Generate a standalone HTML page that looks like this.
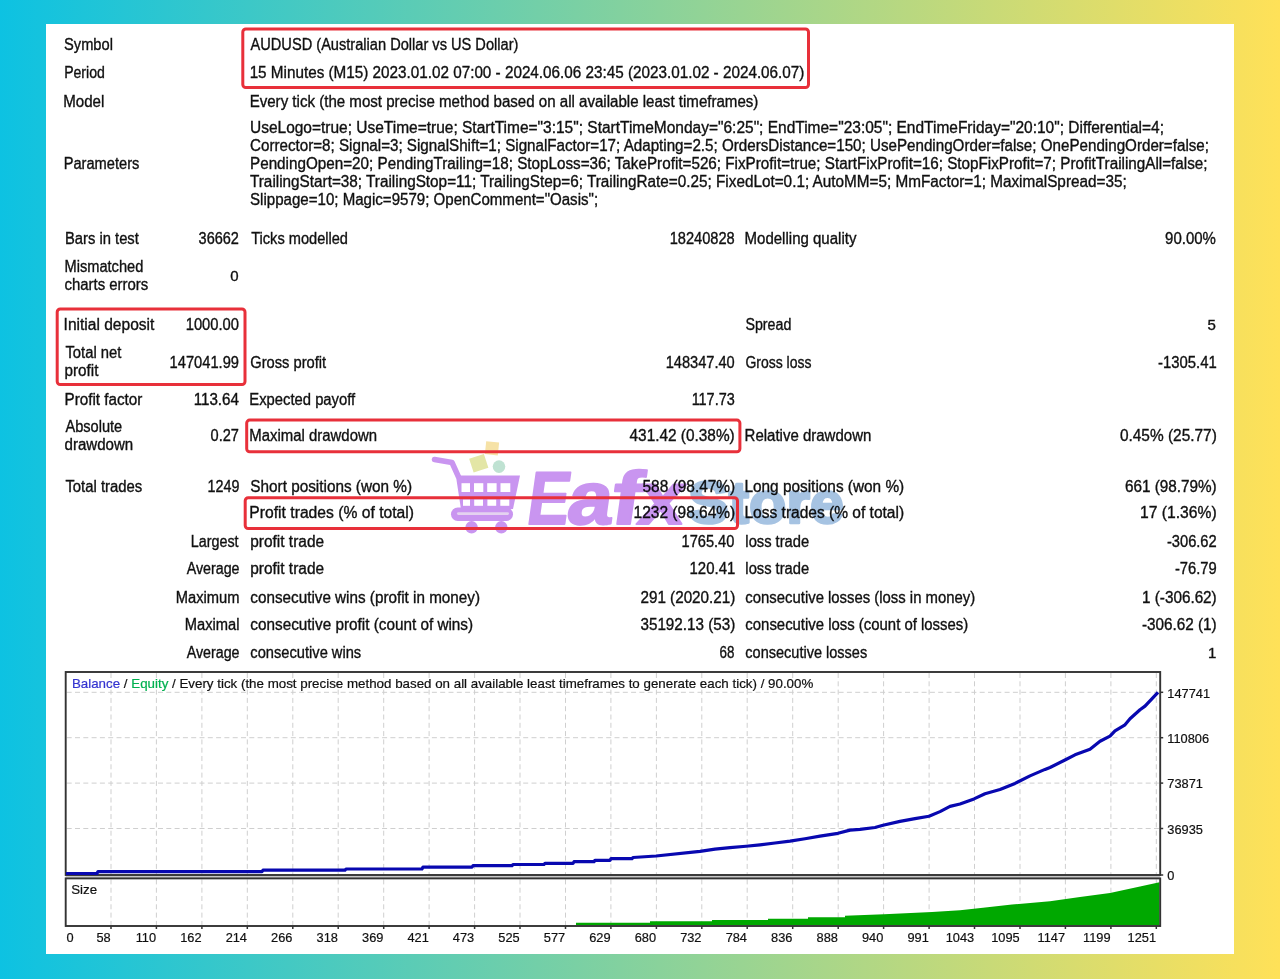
<!DOCTYPE html>
<html><head><meta charset="utf-8"><title>Strategy Tester Report</title>
<style>
html,body{margin:0;padding:0;}
body{width:1280px;height:979px;overflow:hidden;position:relative;background:linear-gradient(90deg,rgb(13,194,226) 0%,rgb(255,225,88) 100%);font-family:"Liberation Sans",sans-serif;}
.panel{position:absolute;left:46px;top:24px;width:1188px;height:930px;background:#fff;}
svg{position:absolute;left:0;top:0;}
svg text{font-family:"Liberation Sans",sans-serif;}
</style></head><body>
<div class="panel"></div>
<svg width="1280" height="979" viewBox="0 0 1280 979" font-size="16" fill="#101010">
<g id="chart">
<line x1="111.0" y1="673" x2="111.0" y2="874" stroke="#cfcfcf" stroke-width="1" stroke-dasharray="5 3.3"/>
<line x1="111.0" y1="879.4" x2="111.0" y2="925" stroke="#cfcfcf" stroke-width="1" stroke-dasharray="5 3.3"/>
<line x1="156.4" y1="673" x2="156.4" y2="874" stroke="#cfcfcf" stroke-width="1" stroke-dasharray="5 3.3"/>
<line x1="156.4" y1="879.4" x2="156.4" y2="925" stroke="#cfcfcf" stroke-width="1" stroke-dasharray="5 3.3"/>
<line x1="201.9" y1="673" x2="201.9" y2="874" stroke="#cfcfcf" stroke-width="1" stroke-dasharray="5 3.3"/>
<line x1="201.9" y1="879.4" x2="201.9" y2="925" stroke="#cfcfcf" stroke-width="1" stroke-dasharray="5 3.3"/>
<line x1="247.3" y1="673" x2="247.3" y2="874" stroke="#cfcfcf" stroke-width="1" stroke-dasharray="5 3.3"/>
<line x1="247.3" y1="879.4" x2="247.3" y2="925" stroke="#cfcfcf" stroke-width="1" stroke-dasharray="5 3.3"/>
<line x1="292.8" y1="673" x2="292.8" y2="874" stroke="#cfcfcf" stroke-width="1" stroke-dasharray="5 3.3"/>
<line x1="292.8" y1="879.4" x2="292.8" y2="925" stroke="#cfcfcf" stroke-width="1" stroke-dasharray="5 3.3"/>
<line x1="338.2" y1="673" x2="338.2" y2="874" stroke="#cfcfcf" stroke-width="1" stroke-dasharray="5 3.3"/>
<line x1="338.2" y1="879.4" x2="338.2" y2="925" stroke="#cfcfcf" stroke-width="1" stroke-dasharray="5 3.3"/>
<line x1="383.7" y1="673" x2="383.7" y2="874" stroke="#cfcfcf" stroke-width="1" stroke-dasharray="5 3.3"/>
<line x1="383.7" y1="879.4" x2="383.7" y2="925" stroke="#cfcfcf" stroke-width="1" stroke-dasharray="5 3.3"/>
<line x1="429.1" y1="673" x2="429.1" y2="874" stroke="#cfcfcf" stroke-width="1" stroke-dasharray="5 3.3"/>
<line x1="429.1" y1="879.4" x2="429.1" y2="925" stroke="#cfcfcf" stroke-width="1" stroke-dasharray="5 3.3"/>
<line x1="474.6" y1="673" x2="474.6" y2="874" stroke="#cfcfcf" stroke-width="1" stroke-dasharray="5 3.3"/>
<line x1="474.6" y1="879.4" x2="474.6" y2="925" stroke="#cfcfcf" stroke-width="1" stroke-dasharray="5 3.3"/>
<line x1="520.0" y1="673" x2="520.0" y2="874" stroke="#cfcfcf" stroke-width="1" stroke-dasharray="5 3.3"/>
<line x1="520.0" y1="879.4" x2="520.0" y2="925" stroke="#cfcfcf" stroke-width="1" stroke-dasharray="5 3.3"/>
<line x1="565.5" y1="673" x2="565.5" y2="874" stroke="#cfcfcf" stroke-width="1" stroke-dasharray="5 3.3"/>
<line x1="565.5" y1="879.4" x2="565.5" y2="925" stroke="#cfcfcf" stroke-width="1" stroke-dasharray="5 3.3"/>
<line x1="610.9" y1="673" x2="610.9" y2="874" stroke="#cfcfcf" stroke-width="1" stroke-dasharray="5 3.3"/>
<line x1="610.9" y1="879.4" x2="610.9" y2="925" stroke="#cfcfcf" stroke-width="1" stroke-dasharray="5 3.3"/>
<line x1="656.4" y1="673" x2="656.4" y2="874" stroke="#cfcfcf" stroke-width="1" stroke-dasharray="5 3.3"/>
<line x1="656.4" y1="879.4" x2="656.4" y2="925" stroke="#cfcfcf" stroke-width="1" stroke-dasharray="5 3.3"/>
<line x1="701.8" y1="673" x2="701.8" y2="874" stroke="#cfcfcf" stroke-width="1" stroke-dasharray="5 3.3"/>
<line x1="701.8" y1="879.4" x2="701.8" y2="925" stroke="#cfcfcf" stroke-width="1" stroke-dasharray="5 3.3"/>
<line x1="747.2" y1="673" x2="747.2" y2="874" stroke="#cfcfcf" stroke-width="1" stroke-dasharray="5 3.3"/>
<line x1="747.2" y1="879.4" x2="747.2" y2="925" stroke="#cfcfcf" stroke-width="1" stroke-dasharray="5 3.3"/>
<line x1="792.7" y1="673" x2="792.7" y2="874" stroke="#cfcfcf" stroke-width="1" stroke-dasharray="5 3.3"/>
<line x1="792.7" y1="879.4" x2="792.7" y2="925" stroke="#cfcfcf" stroke-width="1" stroke-dasharray="5 3.3"/>
<line x1="838.2" y1="673" x2="838.2" y2="874" stroke="#cfcfcf" stroke-width="1" stroke-dasharray="5 3.3"/>
<line x1="838.2" y1="879.4" x2="838.2" y2="925" stroke="#cfcfcf" stroke-width="1" stroke-dasharray="5 3.3"/>
<line x1="883.6" y1="673" x2="883.6" y2="874" stroke="#cfcfcf" stroke-width="1" stroke-dasharray="5 3.3"/>
<line x1="883.6" y1="879.4" x2="883.6" y2="925" stroke="#cfcfcf" stroke-width="1" stroke-dasharray="5 3.3"/>
<line x1="929.1" y1="673" x2="929.1" y2="874" stroke="#cfcfcf" stroke-width="1" stroke-dasharray="5 3.3"/>
<line x1="929.1" y1="879.4" x2="929.1" y2="925" stroke="#cfcfcf" stroke-width="1" stroke-dasharray="5 3.3"/>
<line x1="974.5" y1="673" x2="974.5" y2="874" stroke="#cfcfcf" stroke-width="1" stroke-dasharray="5 3.3"/>
<line x1="974.5" y1="879.4" x2="974.5" y2="925" stroke="#cfcfcf" stroke-width="1" stroke-dasharray="5 3.3"/>
<line x1="1020.0" y1="673" x2="1020.0" y2="874" stroke="#cfcfcf" stroke-width="1" stroke-dasharray="5 3.3"/>
<line x1="1020.0" y1="879.4" x2="1020.0" y2="925" stroke="#cfcfcf" stroke-width="1" stroke-dasharray="5 3.3"/>
<line x1="1065.4" y1="673" x2="1065.4" y2="874" stroke="#cfcfcf" stroke-width="1" stroke-dasharray="5 3.3"/>
<line x1="1065.4" y1="879.4" x2="1065.4" y2="925" stroke="#cfcfcf" stroke-width="1" stroke-dasharray="5 3.3"/>
<line x1="1110.9" y1="673" x2="1110.9" y2="874" stroke="#cfcfcf" stroke-width="1" stroke-dasharray="5 3.3"/>
<line x1="1110.9" y1="879.4" x2="1110.9" y2="925" stroke="#cfcfcf" stroke-width="1" stroke-dasharray="5 3.3"/>
<line x1="1156.3" y1="673" x2="1156.3" y2="874" stroke="#cfcfcf" stroke-width="1" stroke-dasharray="5 3.3"/>
<line x1="1156.3" y1="879.4" x2="1156.3" y2="925" stroke="#cfcfcf" stroke-width="1" stroke-dasharray="5 3.3"/>
<line x1="66.7" y1="692.3" x2="1159.2" y2="692.3" stroke="#cfcfcf" stroke-width="1" stroke-dasharray="5 3.3"/>
<line x1="66.7" y1="737.7" x2="1159.2" y2="737.7" stroke="#cfcfcf" stroke-width="1" stroke-dasharray="5 3.3"/>
<line x1="66.7" y1="783.1" x2="1159.2" y2="783.1" stroke="#cfcfcf" stroke-width="1" stroke-dasharray="5 3.3"/>
<line x1="66.7" y1="828.5" x2="1159.2" y2="828.5" stroke="#cfcfcf" stroke-width="1" stroke-dasharray="5 3.3"/>
<polygon points="576,925 576,922.8 650,922.8 650,921.3 712,921.3 712,920.1 768,920.1 768,918.7 808,918.7 808,917.2 845,917.2 845,915.8 884,914.2 932,912 960,910.3 983,907.8 1012,904.5 1050,901.2 1080,897.1 1110,893 1140,886.5 1159.5,882.2 1159.5,925" fill="#00a800"/>
<rect x="65.7" y="875.6" width="1094.5" height="2.2" fill="#c8c8c8"/>
<rect x="65.7" y="672" width="1094.5" height="203" fill="none" stroke="#333" stroke-width="1.9"/>
<rect x="65.7" y="878.4" width="1094.5" height="47.6" fill="none" stroke="#333" stroke-width="1.9"/>
<polyline points="66,873.5 97,873.5 98,871.6 262,871.6 263,870.2 345,870.2 346,869 422,869 423,867.1 472,867.1 473,865.7 512,865.7 513,864.5 544,864.5 545,863.4 573,863.4 574,861.7 594,861.7 595,860.3 610,860.3 611,858.7 632,858.7 633,857.5 656,856 700,851.4 715,849.1 730,847.7 746,846.25 760,844.8 775,843 790,841.1 805,838.75 820,836.2 838,833.3 850,830.1 860,829.4 875,827.5 883,825.2 900,821.4 915,818.6 929,816.25 940,811.6 950,806.4 960,804 974,798.9 985,793.75 1000,789.5 1015,783.4 1030,775.9 1045,769.4 1050,767.5 1065,760 1075,754.8 1090,749.2 1100,741.25 1110,736.1 1115,730.9 1125,724.8 1130,718.75 1140,709.8 1145,706.1 1158,692.3" fill="none" stroke="#0808b0" stroke-width="3.2" stroke-linejoin="round"/>
<line x1="111.0" y1="926" x2="111.0" y2="929" stroke="#333" stroke-width="1.5"/>
<line x1="156.4" y1="926" x2="156.4" y2="929" stroke="#333" stroke-width="1.5"/>
<line x1="201.9" y1="926" x2="201.9" y2="929" stroke="#333" stroke-width="1.5"/>
<line x1="247.3" y1="926" x2="247.3" y2="929" stroke="#333" stroke-width="1.5"/>
<line x1="292.8" y1="926" x2="292.8" y2="929" stroke="#333" stroke-width="1.5"/>
<line x1="338.2" y1="926" x2="338.2" y2="929" stroke="#333" stroke-width="1.5"/>
<line x1="383.7" y1="926" x2="383.7" y2="929" stroke="#333" stroke-width="1.5"/>
<line x1="429.1" y1="926" x2="429.1" y2="929" stroke="#333" stroke-width="1.5"/>
<line x1="474.6" y1="926" x2="474.6" y2="929" stroke="#333" stroke-width="1.5"/>
<line x1="520.0" y1="926" x2="520.0" y2="929" stroke="#333" stroke-width="1.5"/>
<line x1="565.5" y1="926" x2="565.5" y2="929" stroke="#333" stroke-width="1.5"/>
<line x1="610.9" y1="926" x2="610.9" y2="929" stroke="#333" stroke-width="1.5"/>
<line x1="656.4" y1="926" x2="656.4" y2="929" stroke="#333" stroke-width="1.5"/>
<line x1="701.8" y1="926" x2="701.8" y2="929" stroke="#333" stroke-width="1.5"/>
<line x1="747.2" y1="926" x2="747.2" y2="929" stroke="#333" stroke-width="1.5"/>
<line x1="792.7" y1="926" x2="792.7" y2="929" stroke="#333" stroke-width="1.5"/>
<line x1="838.2" y1="926" x2="838.2" y2="929" stroke="#333" stroke-width="1.5"/>
<line x1="883.6" y1="926" x2="883.6" y2="929" stroke="#333" stroke-width="1.5"/>
<line x1="929.1" y1="926" x2="929.1" y2="929" stroke="#333" stroke-width="1.5"/>
<line x1="974.5" y1="926" x2="974.5" y2="929" stroke="#333" stroke-width="1.5"/>
<line x1="1020.0" y1="926" x2="1020.0" y2="929" stroke="#333" stroke-width="1.5"/>
<line x1="1065.4" y1="926" x2="1065.4" y2="929" stroke="#333" stroke-width="1.5"/>
<line x1="1110.9" y1="926" x2="1110.9" y2="929" stroke="#333" stroke-width="1.5"/>
<line x1="1156.3" y1="926" x2="1156.3" y2="929" stroke="#333" stroke-width="1.5"/>
<line x1="1160.2" y1="692.3" x2="1163.2" y2="692.3" stroke="#333" stroke-width="1.5"/>
<line x1="1160.2" y1="737.7" x2="1163.2" y2="737.7" stroke="#333" stroke-width="1.5"/>
<line x1="1160.2" y1="783.1" x2="1163.2" y2="783.1" stroke="#333" stroke-width="1.5"/>
<line x1="1160.2" y1="828.5" x2="1163.2" y2="828.5" stroke="#333" stroke-width="1.5"/>
<line x1="1160.2" y1="875" x2="1163.2" y2="875" stroke="#333" stroke-width="1.5"/>
</g>
<g id="ctext" stroke="#101010" stroke-width="0.2">
<text x="71.9" y="688.1" font-size="13.3" textLength="741.4" lengthAdjust="spacingAndGlyphs"><tspan fill="#3434d0" stroke="#3434d0">Balance</tspan> / <tspan fill="#00b050" stroke="#00b050">Equity</tspan> / Every tick (the most precise method based on all available least timeframes to generate each tick) / 90.00%</text>
<text x="71.2" y="894.4" font-size="13.3" id="e78">Size</text>
<text x="1167.3" y="697.5999999999999" font-size="12.8" id="e79">147741</text>
<text x="1167.3" y="743.0" font-size="12.8" id="e80">110806</text>
<text x="1167.3" y="788.4" font-size="12.8" id="e81">73871</text>
<text x="1167.3" y="833.8" font-size="12.8" id="e82">36935</text>
<text x="1167.3" y="880.3" font-size="12.8" id="e83">0</text>
<text x="66.5" y="941.8" font-size="12.8" id="e84">0</text>
<text x="110.7" y="941.8" text-anchor="end" font-size="12.8" id="e85">58</text>
<text x="156.1" y="941.8" text-anchor="end" font-size="12.8" id="e86">110</text>
<text x="201.6" y="941.8" text-anchor="end" font-size="12.8" id="e87">162</text>
<text x="247.0" y="941.8" text-anchor="end" font-size="12.8" id="e88">214</text>
<text x="292.4" y="941.8" text-anchor="end" font-size="12.8" id="e89">266</text>
<text x="337.9" y="941.8" text-anchor="end" font-size="12.8" id="e90">318</text>
<text x="383.4" y="941.8" text-anchor="end" font-size="12.8" id="e91">369</text>
<text x="428.8" y="941.8" text-anchor="end" font-size="12.8" id="e92">421</text>
<text x="474.2" y="941.8" text-anchor="end" font-size="12.8" id="e93">473</text>
<text x="519.7" y="941.8" text-anchor="end" font-size="12.8" id="e94">525</text>
<text x="565.2" y="941.8" text-anchor="end" font-size="12.8" id="e95">577</text>
<text x="610.6" y="941.8" text-anchor="end" font-size="12.8" id="e96">629</text>
<text x="656.1" y="941.8" text-anchor="end" font-size="12.8" id="e97">680</text>
<text x="701.5" y="941.8" text-anchor="end" font-size="12.8" id="e98">732</text>
<text x="747.0" y="941.8" text-anchor="end" font-size="12.8" id="e99">784</text>
<text x="792.4" y="941.8" text-anchor="end" font-size="12.8" id="e100">836</text>
<text x="837.9" y="941.8" text-anchor="end" font-size="12.8" id="e101">888</text>
<text x="883.3" y="941.8" text-anchor="end" font-size="12.8" id="e102">940</text>
<text x="928.8" y="941.8" text-anchor="end" font-size="12.8" id="e103">991</text>
<text x="974.2" y="941.8" text-anchor="end" font-size="12.8" id="e104">1043</text>
<text x="1019.7" y="941.8" text-anchor="end" font-size="12.8" id="e105">1095</text>
<text x="1065.1" y="941.8" text-anchor="end" font-size="12.8" id="e106">1147</text>
<text x="1110.6" y="941.8" text-anchor="end" font-size="12.8" id="e107">1199</text>
<text x="1156.0" y="941.8" text-anchor="end" font-size="12.8" id="e108">1251</text>
</g>
<g id="stats" stroke="#101010" stroke-width="0.35">
<text x="64.05" y="49.7" textLength="48.86" lengthAdjust="spacingAndGlyphs" id="e0">Symbol</text>
<text x="250.54" y="49.7" textLength="267.85" lengthAdjust="spacingAndGlyphs" id="e1">AUDUSD (Australian Dollar vs US Dollar)</text>
<text x="64.14" y="78.1" textLength="40.72" lengthAdjust="spacingAndGlyphs" id="e2">Period</text>
<text x="249.64" y="78.1" textLength="554.76" lengthAdjust="spacingAndGlyphs" id="e3">15 Minutes (M15) 2023.01.02 07:00 - 2024.06.06 23:45 (2023.01.02 - 2024.06.07)</text>
<text x="63.24" y="106.5" textLength="41.11" lengthAdjust="spacingAndGlyphs" id="e4">Model</text>
<text x="249.64" y="106.5" textLength="508.76" lengthAdjust="spacingAndGlyphs" id="e5">Every tick (the most precise method based on all available least timeframes)</text>
<text x="250" y="133.4" textLength="914" lengthAdjust="spacingAndGlyphs" id="e6">UseLogo=true; UseTime=true; StartTime="3:15"; StartTimeMonday="6:25"; EndTime="23:05"; EndTimeFriday="20:10"; Differential=4;</text>
<text x="250" y="151.4" textLength="959" lengthAdjust="spacingAndGlyphs" id="e7">Corrector=8; Signal=3; SignalShift=1; SignalFactor=17; Adapting=2.5; OrdersDistance=150; UsePendingOrder=false; OnePendingOrder=false;</text>
<text x="250" y="169.4" textLength="957.5" lengthAdjust="spacingAndGlyphs" id="e8">PendingOpen=20; PendingTrailing=18; StopLoss=36; TakeProfit=526; FixProfit=true; StartFixProfit=16; StopFixProfit=7; ProfitTrailingAll=false;</text>
<text x="250" y="187.4" textLength="876.7" lengthAdjust="spacingAndGlyphs" id="e9">TrailingStart=38; TrailingStop=11; TrailingStep=6; TrailingRate=0.25; FixedLot=0.1; AutoMM=5; MmFactor=1; MaximalSpread=35;</text>
<text x="250" y="205.4" textLength="348.1" lengthAdjust="spacingAndGlyphs" id="e10">Slippage=10; Magic=9579; OpenComment="Oasis";</text>
<text x="63.69" y="169.4" textLength="75.7" lengthAdjust="spacingAndGlyphs" id="e11">Parameters</text>
<text x="64.95" y="243.8" textLength="73.9" lengthAdjust="spacingAndGlyphs" id="e12">Bars in test</text>
<text x="238.96" y="243.8" text-anchor="end" textLength="40.37" lengthAdjust="spacingAndGlyphs" id="e13">36662</text>
<text x="251.17" y="243.8" textLength="96.83" lengthAdjust="spacingAndGlyphs" id="e14">Ticks modelled</text>
<text x="734.71" y="243.8" text-anchor="end" textLength="65.05" lengthAdjust="spacingAndGlyphs" id="e15">18240828</text>
<text x="744.55" y="243.8" textLength="111.9" lengthAdjust="spacingAndGlyphs" id="e16">Modelling quality</text>
<text x="1215.9" y="243.8" text-anchor="end" textLength="50.82" lengthAdjust="spacingAndGlyphs" id="e17">90.00%</text>
<text x="64.5" y="271.6" textLength="78.77" lengthAdjust="spacingAndGlyphs" id="e18">Mismatched</text>
<text x="64.5" y="289.6" textLength="83.8" lengthAdjust="spacingAndGlyphs" id="e19">charts errors</text>
<text x="238.6" y="281" text-anchor="end" font-size="15" id="e20">0</text>
<text x="63.6" y="330.3" textLength="90.73" lengthAdjust="spacingAndGlyphs" id="e21">Initial deposit</text>
<text x="238.96" y="330.3" text-anchor="end" textLength="53.27" lengthAdjust="spacingAndGlyphs" id="e22">1000.00</text>
<text x="745.45" y="330.3" textLength="45.91" lengthAdjust="spacingAndGlyphs" id="e23">Spread</text>
<text x="1215.9" y="330.3" text-anchor="end" font-size="15" id="e24">5</text>
<text x="65.4" y="358.2" textLength="55.98" lengthAdjust="spacingAndGlyphs" id="e25">Total net</text>
<text x="64.5" y="376.2" textLength="33.88" lengthAdjust="spacingAndGlyphs" id="e26">profit</text>
<text x="238.96" y="367.6" text-anchor="end" textLength="69.34" lengthAdjust="spacingAndGlyphs" id="e27">147041.99</text>
<text x="250.27" y="367.6" textLength="75.87" lengthAdjust="spacingAndGlyphs" id="e28">Gross profit</text>
<text x="734.71" y="367.6" text-anchor="end" textLength="69.05" lengthAdjust="spacingAndGlyphs" id="e29">148347.40</text>
<text x="745.45" y="367.6" textLength="65.99" lengthAdjust="spacingAndGlyphs" id="e30">Gross loss</text>
<text x="1216.8" y="367.6" text-anchor="end" textLength="58.75" lengthAdjust="spacingAndGlyphs" id="e31">-1305.41</text>
<text x="64.5" y="405" textLength="77.83" lengthAdjust="spacingAndGlyphs" id="e32">Profit factor</text>
<text x="238.96" y="405" text-anchor="end" textLength="45.28" lengthAdjust="spacingAndGlyphs" id="e33">113.64</text>
<text x="249.37" y="405" textLength="105.81" lengthAdjust="spacingAndGlyphs" id="e34">Expected payoff</text>
<text x="734.71" y="405" text-anchor="end" textLength="43.07" lengthAdjust="spacingAndGlyphs" id="e35">117.73</text>
<text x="65.4" y="432" textLength="56.83" lengthAdjust="spacingAndGlyphs" id="e36">Absolute</text>
<text x="64.5" y="450" textLength="68.75" lengthAdjust="spacingAndGlyphs" id="e37">drawdown</text>
<text x="238.96" y="440.6" text-anchor="end" textLength="28.37" lengthAdjust="spacingAndGlyphs" id="e38">0.27</text>
<text x="249.37" y="440.6" textLength="127.67" lengthAdjust="spacingAndGlyphs" id="e39">Maximal drawdown</text>
<text x="734.71" y="440.6" text-anchor="end" textLength="105.17" lengthAdjust="spacingAndGlyphs" id="e40">431.42 (0.38%)</text>
<text x="744.55" y="440.6" textLength="126.79" lengthAdjust="spacingAndGlyphs" id="e41">Relative drawdown</text>
<text x="1216.8" y="440.6" text-anchor="end" textLength="96.85" lengthAdjust="spacingAndGlyphs" id="e42">0.45% (25.77)</text>
<text x="65.4" y="491.7" textLength="76.88" lengthAdjust="spacingAndGlyphs" id="e43">Total trades</text>
<text x="239.5" y="491.7" text-anchor="end" textLength="31.89" lengthAdjust="spacingAndGlyphs" id="e44">1249</text>
<text x="250.27" y="491.7" textLength="161.8" lengthAdjust="spacingAndGlyphs" id="e45">Short positions (won %)</text>
<text x="735.25" y="491.7" text-anchor="end" textLength="92.78" lengthAdjust="spacingAndGlyphs" id="e46">588 (98.47%)</text>
<text x="744.46" y="491.7" textLength="159.75" lengthAdjust="spacingAndGlyphs" id="e47">Long positions (won %)</text>
<text x="1216.71" y="491.7" text-anchor="end" textLength="91.82" lengthAdjust="spacingAndGlyphs" id="e48">661 (98.79%)</text>
<text x="249.37" y="518.3" textLength="164.65" lengthAdjust="spacingAndGlyphs" id="e49">Profit trades (% of total)</text>
<text x="735.25" y="518.3" text-anchor="end" textLength="101.68" lengthAdjust="spacingAndGlyphs" id="e50">1232 (98.64%)</text>
<text x="744.46" y="518.3" textLength="159.65" lengthAdjust="spacingAndGlyphs" id="e51">Loss trades (% of total)</text>
<text x="1216.71" y="518.3" text-anchor="end" textLength="76.68" lengthAdjust="spacingAndGlyphs" id="e52">17 (1.36%)</text>
<text x="238.6" y="546.9" text-anchor="end" textLength="47.8" lengthAdjust="spacingAndGlyphs" id="e53">Largest</text>
<text x="250.27" y="546.9" textLength="73.78" lengthAdjust="spacingAndGlyphs" id="e54">profit trade</text>
<text x="734.35" y="546.9" text-anchor="end" textLength="52.8" lengthAdjust="spacingAndGlyphs" id="e55">1765.40</text>
<text x="745.36" y="546.9" textLength="63.79" lengthAdjust="spacingAndGlyphs" id="e56">loss trade</text>
<text x="1216.71" y="546.9" text-anchor="end" textLength="49.79" lengthAdjust="spacingAndGlyphs" id="e57">-306.62</text>
<text x="239.5" y="574.1" text-anchor="end" textLength="52.84" lengthAdjust="spacingAndGlyphs" id="e58">Average</text>
<text x="250.27" y="574.1" textLength="73.78" lengthAdjust="spacingAndGlyphs" id="e59">profit trade</text>
<text x="735.25" y="574.1" text-anchor="end" textLength="45.68" lengthAdjust="spacingAndGlyphs" id="e60">120.41</text>
<text x="745.36" y="574.1" textLength="63.79" lengthAdjust="spacingAndGlyphs" id="e61">loss trade</text>
<text x="1216.71" y="574.1" text-anchor="end" textLength="41.77" lengthAdjust="spacingAndGlyphs" id="e62">-76.79</text>
<text x="239.5" y="602.6" text-anchor="end" textLength="63.75" lengthAdjust="spacingAndGlyphs" id="e63">Maximum</text>
<text x="250.36" y="602.6" textLength="229.63" lengthAdjust="spacingAndGlyphs" id="e64">consecutive wins (profit in money)</text>
<text x="735.25" y="602.6" text-anchor="end" textLength="94.76" lengthAdjust="spacingAndGlyphs" id="e65">291 (2020.21)</text>
<text x="745.36" y="602.6" textLength="229.8" lengthAdjust="spacingAndGlyphs" id="e66">consecutive losses (loss in money)</text>
<text x="1216.71" y="602.6" text-anchor="end" textLength="74.74" lengthAdjust="spacingAndGlyphs" id="e67">1 (-306.62)</text>
<text x="239.5" y="629.9" text-anchor="end" textLength="54.7" lengthAdjust="spacingAndGlyphs" id="e68">Maximal</text>
<text x="250.36" y="629.9" textLength="222.76" lengthAdjust="spacingAndGlyphs" id="e69">consecutive profit (count of wins)</text>
<text x="735.25" y="629.9" text-anchor="end" textLength="94.76" lengthAdjust="spacingAndGlyphs" id="e70">35192.13 (53)</text>
<text x="745.36" y="629.9" textLength="222.83" lengthAdjust="spacingAndGlyphs" id="e71">consecutive loss (count of losses)</text>
<text x="1216.71" y="629.9" text-anchor="end" textLength="74.8" lengthAdjust="spacingAndGlyphs" id="e72">-306.62 (1)</text>
<text x="239.5" y="657.8" text-anchor="end" textLength="52.84" lengthAdjust="spacingAndGlyphs" id="e73">Average</text>
<text x="250.36" y="657.8" textLength="110.85" lengthAdjust="spacingAndGlyphs" id="e74">consecutive wins</text>
<text x="734.35" y="657.8" text-anchor="end" textLength="14.86" lengthAdjust="spacingAndGlyphs" id="e75">68</text>
<text x="745.36" y="657.8" textLength="121.84" lengthAdjust="spacingAndGlyphs" id="e76">consecutive losses</text>
<text x="1216.35" y="657.8" text-anchor="end" font-size="15" id="e77">1</text>
</g>

<g style="mix-blend-mode:multiply" font-family="Liberation Sans, sans-serif">
 <rect x="485.5" y="441.8" width="13" height="13" fill="#f6e2a6" transform="rotate(6 492 448.3)"/>
 <rect x="471" y="456" width="15.5" height="14.5" fill="#e3e6a6" transform="rotate(-18 478.7 463.2)"/>
 <circle cx="499" cy="466.6" r="6.3" fill="#bfe2d2"/>
 <path d="M434.5 459.5 L452 462.5 L459 478 L463.5 507.5" fill="none" stroke="#c995f0" stroke-width="5.5" stroke-linecap="round" stroke-linejoin="round"/>
 <path d="M456.5 475.5 L520 475.5 L513 509 L463 509 Z" fill="#c995f0"/>
 <g fill="#ffffff">
  <rect x="461.5" y="483.2" width="8.5" height="8.8"/><rect x="474" y="483.2" width="9.3" height="8.8"/><rect x="487.2" y="483.2" width="9.4" height="8.8"/><rect x="500.5" y="483.2" width="9.8" height="8.8"/>
  <rect x="463" y="499.5" width="7" height="6.3"/><rect x="474.2" y="499.5" width="8.8" height="6.3"/><rect x="487.4" y="499.5" width="8.8" height="6.3"/><rect x="500.3" y="499.5" width="9" height="6.3"/>
 </g>
 <rect x="451" y="507.5" width="62" height="13.5" rx="6.7" fill="#c995f0"/>
 <rect x="457" y="512.3" width="52" height="2.6" rx="1.3" fill="#e4d2f0"/>
 <circle cx="471.6" cy="527.3" r="6.2" fill="#c995f0"/><circle cx="501.3" cy="527.3" r="6.2" fill="#c995f0"/>
 <g font-size="75" font-weight="bold" fill="#c995f0" stroke="#c995f0" stroke-width="2" stroke-linejoin="round" transform="translate(0 524.5) skewX(-8) translate(0 -524.5)">
  <text x="525" y="524.5" textLength="42" lengthAdjust="spacingAndGlyphs">E</text>
  <text x="565" y="524.5" textLength="45" lengthAdjust="spacingAndGlyphs">a</text>
  <text x="609" y="524.5" textLength="30" lengthAdjust="spacingAndGlyphs">f</text>
  <text x="636" y="524.5" textLength="46" lengthAdjust="spacingAndGlyphs">x</text>
 </g>
 <text x="688" y="523.2" font-size="59" font-weight="bold" fill="#a6c3e2" stroke="#a6c3e2" stroke-width="2.6" stroke-linejoin="round" textLength="156" lengthAdjust="spacingAndGlyphs">Store</text>
</g>
<g id="red">
<rect x="242.8" y="29.0" width="565.7" height="58.5" rx="3" fill="none" stroke="#e8303a" stroke-width="3"/>
<rect x="57.2" y="308.9" width="187.8" height="75.7" rx="3" fill="none" stroke="#e8303a" stroke-width="3"/>
<rect x="246.7" y="420.1" width="493.2" height="31.6" rx="3" fill="none" stroke="#e8303a" stroke-width="3"/>
<rect x="245.2" y="497.8" width="492.3" height="30.7" rx="3" fill="none" stroke="#e8303a" stroke-width="3"/>
</g>
</svg>
</body></html>
